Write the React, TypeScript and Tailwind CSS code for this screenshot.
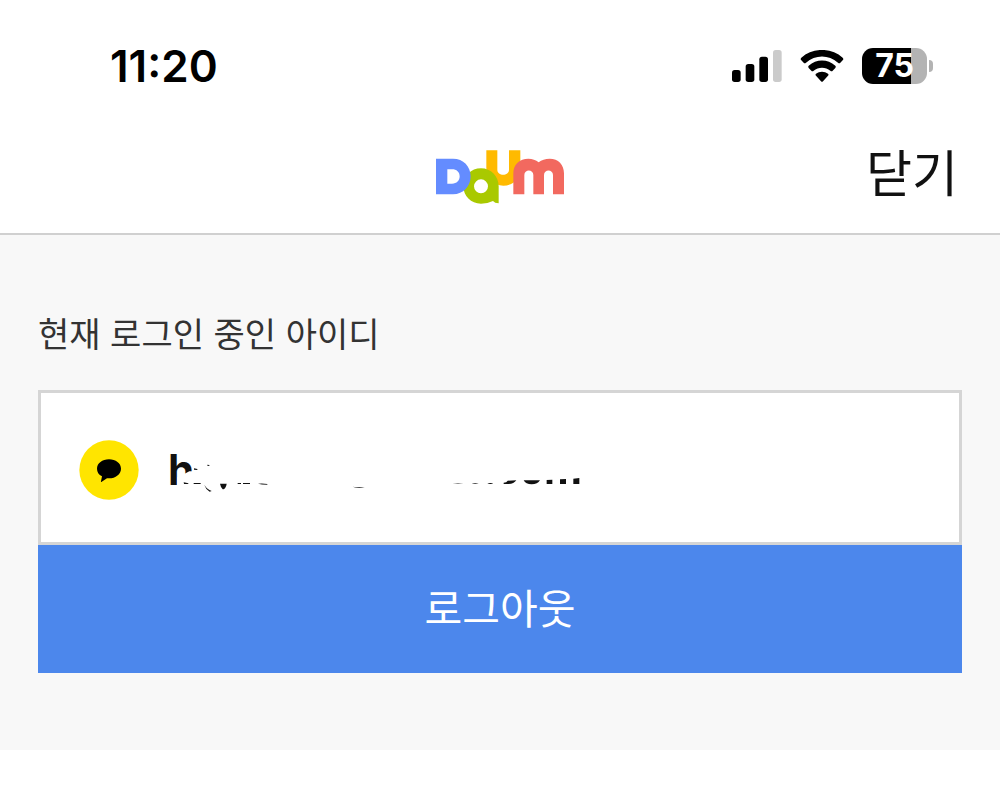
function SignalIcon() {
  return (
    <svg width="50" height="32" viewBox="0 0 150 96" aria-hidden="true">
      <rect x="0" y="60" width="26" height="36" rx="8" fill="#000" />
      <rect x="41" y="42" width="26" height="54" rx="8" fill="#000" />
      <rect x="82" y="20" width="26" height="76" rx="8" fill="#000" />
      <rect x="123" y="0" width="26" height="96" rx="8" fill="#cbcbcb" />
    </svg>
  )
}

function WifiIcon() {
  return (
    <svg width="44" height="32" viewBox="0 0 132 96" aria-hidden="true">
      <path d="M4 23C38-8 94-8 128 23Q132 27 128 31L121 38Q118 41 114 38C86 13 46 13 18 38Q14 41 11 38L4 31Q0 27 4 23Z" />
      <path d="M26 47C49 26 83 26 106 47Q109 50 106 54L98 62Q95 65 91 62C77 50 55 50 41 62Q37 65 34 62L26 54Q23 50 26 47Z" />
      <path d="M48 71C58 63 74 63 84 71Q87 74 84 77L69 94Q66 97 63 94L48 77Q45 74 48 71Z" />
    </svg>
  )
}

function BatteryIcon() {
  return (
    <div className="flex items-center gap-0.5">
      <div className="flex h-9 w-[65px] items-center justify-center rounded-[11px] bg-linear-to-r from-black from-75% to-[#b3b3b3] to-75%">
        <span className="text-[32px] leading-9 font-bold text-white">75</span>
      </div>
      <div className="h-3 w-1 rounded-r-full bg-[#b3b3b3]" />
    </div>
  )
}

function DaumLogo() {
  return (
    <svg width="128" height="54" viewBox="33 29 384 162" role="img" aria-label="Daum">
      <path fill="#ffba00" d="M184 30H217V88C217 108 252 108 252 88V30H286V84C286 116 264 136 235 136S184 116 184 84Z" />
      <path
        fill="#a9c900"
        fillRule="evenodd"
        d="M168 84C198 84 221 108 221 138V189Q209 189 204 182Q188 190 168 190C138 190 115 167 115 137S138 84 168 84ZM168 117A21 21 0 1 0 168 159A21 21 0 1 0 168 117Z"
      />
      <path
        fill="#648cff"
        fillRule="evenodd"
        d="M33 55H84C115 55 137 78 137 108S115 162 84 162H33ZM67 87V130H81C95 130 104 121 104 108S95 87 81 87Z"
      />
      <path
        fill="#f2695f"
        d="M265 162V99C265 72 284 55 310 55Q328 55 341 66Q354 55 374 55C400 55 417 73 417 99V162H384V104C384 86 357 86 357 104V162H325V104C325 86 298 86 298 104V162Z"
      />
    </svg>
  )
}

function KakaoBadge() {
  return (
    <svg width="60" height="60" viewBox="0 0 180 180" role="img" aria-label="Kakao" className="shrink-0">
      <circle cx="90" cy="90" r="89" fill="#ffe500" />
      <path d="M90 58C110 58 126 70 126 86S110 115 90 115L84 115L67 126Q65 127 66 124L69 109C59 104 54 96 54 86C54 70 70 58 90 58Z" />
    </svg>
  )
}

// Account id with most of its letters wiped out
function MaskedId() {
  return (
    <div className="relative">
      <span className="block text-[42px] leading-[60px] font-bold text-[#111]">h</span>
      <svg width="420" height="60" viewBox="0 0 1260 180" aria-hidden="true" className="absolute top-0 left-0">
        <path fill="#fff" d="M50 101L64 94H90V150H28V112Q38 104 50 101Z" />
        <g fill="#111">
          <path d="M47 127L61 130V132H48Z" />
          <path d="M78 85L88 87V90L78 89Z" />
          <path d="M118 74L124 75V78L118 77Z" />
          <path d="M77 129H98V132H77Z" />
          <path d="M110 136Q117 149 131 153L125 155Q114 149 110 137Z" />
          <path d="M156 131H176Q174 144 167 148H164Q158 142 156 131Z" />
          <path d="M209 129H219V132H209ZM225 129H246V132H225ZM270 131Q284 129 298 132V134Q280 134 270 131Z" />
          <path d="M554 140Q571 143 590 141Q573 147 554 140Z" />
          <path d="M854 129Q870 132 886 129Q870 135 854 129ZM911 129H932Q921 134 911 129ZM958 129H976Q967 135 958 129Z" />
          <path d="M1019 122L1045 121Q1037 133 1019 132H1007V128Q1016 128 1019 122Z" />
          <path d="M1067 121H1116Q1109 133 1091 133T1067 121Z" />
          <path d="M1136 120L1153 119V132H1136ZM1176 118L1194 117V132H1176ZM1216 116L1234 114V132H1216Z" />
        </g>
      </svg>
    </div>
  )
}

export default function App() {
  return (
    <div className="min-h-screen bg-white font-['Inter','Noto_Sans_CJK_KR',sans-serif]">
      {/* Status bar */}
      <div className="flex h-[132px] items-center justify-between pr-[67px] pl-[110px]">
        <time className="text-[44px] leading-none font-semibold text-black">11:20</time>
        <div className="flex items-center gap-[18px]">
          <SignalIcon />
          <WifiIcon />
          <BatteryIcon />
        </div>
      </div>

      {/* Header */}
      <header className="grid h-[103px] grid-cols-[1fr_auto_1fr] items-start border-b-2 border-[#d0d0d0] px-[42px]">
        <a href="#" className="col-start-2 pt-[18px]">
          <DaumLogo />
        </a>
        <button type="button" className="justify-self-end pt-3 text-[50px] leading-[60px] text-[#111]">
          닫기
        </button>
      </header>

      <main className="bg-[#f8f8f8] px-[38px] pt-[75px] pb-[77px]">
        <h1 className="text-[34px] leading-[50px] text-[#333]">현재 로그인 중인 아이디</h1>
        <div className="mt-[30px] flex h-[155px] items-center gap-[29px] border-[3px] border-[#d5d5d5] bg-white px-[38px] pt-1">
          <KakaoBadge />
          <MaskedId />
        </div>
        <button type="button" className="block h-32 w-full bg-[#4c87ec] text-[41px] leading-none text-white">
          로그아웃
        </button>
      </main>
    </div>
  )
}
